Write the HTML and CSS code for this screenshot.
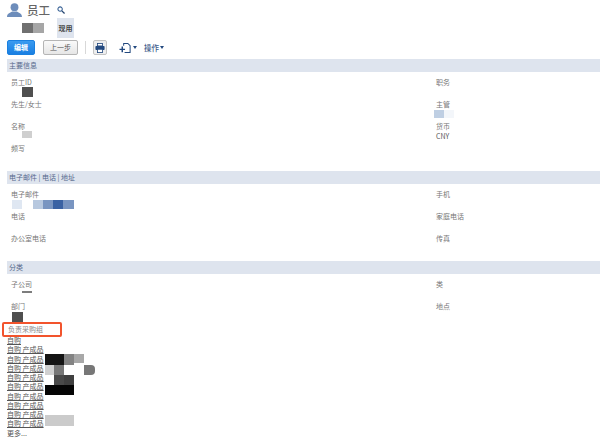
FILE: index.html
```html
<!DOCTYPE html>
<html lang="zh">
<head>
<meta charset="utf-8">
<title>员工</title>
<link rel="stylesheet" href="styles.css">
</head>
<body>
<header class="title-row">
  <svg class="user-icon" width="15" height="14" viewBox="0 0 16 15"><circle cx="8" cy="4.500" r="4.200" fill="#6d8dbb"/><path d="M0 15c0-4 3-4.500 5.500-6h5c2.500 1.500 5.500 2 5.500 6z" fill="#6d8dbb"/></svg>
  <h1 class="title">员工</h1>
  <svg class="search-icon" width="8" height="8" viewBox="0 0 9 9"><circle cx="3.500" cy="3.500" r="2.500" fill="none" stroke="#3a6396" stroke-width="1.200"/><path d="M5.500 5.500L8.500 8.500" stroke="#25456f" stroke-width="1.500"/></svg>
</header>
<div class="status-row">
  <div class="mosaic-pair"><span class="m m-dark"></span><span class="m m-mid"></span></div>
  <div class="status">现用</div>
</div>
<div class="toolbar">
  <button class="btn btn-primary">编辑</button>
  <button class="btn">上一步</button>
  <span class="divider"></span>
  <span class="print-btn">
    <svg width="10" height="10" viewBox="0 0 12 12"><rect x="3" y="0.500" width="6" height="3" fill="#fff" stroke="#23497f"/><rect x="0.500" y="3.500" width="11" height="5" rx="1" fill="#23497f"/><rect x="3" y="7.500" width="6" height="4" fill="#fff" stroke="#23497f"/></svg>
  </span>
  <span class="add-menu">
    <svg width="13" height="12" viewBox="0 0 14 13"><path d="M5 4V1.500h4.500L12 4v7.500H6" fill="none" stroke="#23497f" stroke-width="1.100"/><path d="M0.500 8h6M3.500 5v6" stroke="#23497f" stroke-width="1.600"/></svg>
    <span class="caret"></span>
  </span>
  <span class="action-menu">操作<span class="caret"></span></span>
</div>

<section class="section">
  <h2 class="section-head">主要信息</h2>
  <div class="fields">
    <div class="field"><div class="label">员工ID</div><span class="m m-ink m-indent"></span></div>
    <div class="field"><div class="label">职务</div></div>
    <div class="field"><div class="label">先生/女士</div></div>
    <div class="field"><div class="label">主管</div><div class="mosaic-pair mosaic-boss"><span class="m m-pale"></span><span class="m m-faint"></span></div></div>
    <div class="field"><div class="label">名称</div><span class="m m-light m-indent"></span></div>
    <div class="field"><div class="label">货币</div><div class="value">CNY</div></div>
    <div class="field"><div class="label">频写</div></div>
  </div>
</section>

<section class="section">
  <h2 class="section-head">电子邮件 | 电话 | 地址</h2>
  <div class="fields">
    <div class="field"><div class="label">电子邮件</div>
      <div class="mosaic-pair mosaic-mail"><span class="m m-ice"></span><span class="m m-gap"></span><span class="m m-b1"></span><span class="m m-b2"></span><span class="m m-b3"></span><span class="m m-b2"></span></div>
    </div>
    <div class="field"><div class="label">手机</div></div>
    <div class="field"><div class="label">电话</div></div>
    <div class="field"><div class="label">家庭电话</div></div>
    <div class="field"><div class="label">办公室电话</div></div>
    <div class="field"><div class="label">传真</div></div>
  </div>
</section>

<section class="section">
  <h2 class="section-head">分类</h2>
  <div class="fields fields-short">
    <div class="field"><div class="label">子公司</div><span class="m-bar"></span></div>
    <div class="field"><div class="label">类</div></div>
    <div class="field"><div class="label">部门</div><span class="m m-ink m-flush"></span></div>
    <div class="field"><div class="label">地点</div></div>
  </div>
</section>

<div class="group">
  <div class="group-label">负责采购组</div>
  <ul class="group-list">
    <li><a>自购</a></li>
    <li><a>自购 产成品</a></li>
    <li><a>自购 产成品</a></li>
    <li><a>自购 产成品</a></li>
    <li><a>自购 产成品</a></li>
    <li><a>自购 产成品</a></li>
    <li><a>自购 产成品</a></li>
    <li><a>自购 产成品</a></li>
    <li><a>自购 产成品</a></li>
    <li><a>自购 产成品</a></li>
    <li class="more">更多...</li>
  </ul>
  <div class="blot b1"></div><div class="blot b2"></div><div class="blot b3"></div>
  <div class="blot b4"></div><div class="blot b5"></div><div class="blot b6"></div>
  <div class="blot b7"></div><div class="blot b8"></div><div class="blot b9"></div>
  <div class="blot b10"></div>
</div>
</body>
</html>
```
FILE: styles.css
```css
* { box-sizing: border-box; }
html, body { margin: 0; padding: 0; }
body {
  width: 600px;
  height: 440px;
  overflow: hidden;
  background: #fff;
  color: #777;
  font-family: "Noto Sans CJK SC", "Liberation Sans", sans-serif;
  font-size: 7px;
  line-height: 9px;
}
.title-row {
  display: flex;
  align-items: center;
  height: 18px;
  padding: 2px 0 0 7px;
}
.title {
  margin: 0 0 0 5px;
  font-size: 11.500px;
  line-height: 16px;
  font-weight: 500;
  color: #666;
}
.search-icon { margin-left: 7px; }
.status-row {
  display: flex;
  align-items: center;
  height: 20px;
  padding-left: 22px;
}
.mosaic-pair { display: flex; }
.m { display: block; width: 11px; height: 10px; }
.m-dark { background: #707070; }
.m-mid { background: #a6a6a6; }
.status {
  display: flex;
  align-items: center;
  justify-content: center;
  width: 17px;
  height: 20px;
  margin-left: 13px;
  background: #dee4ee;
  color: #444;
  font-weight: 700;
}
.toolbar {
  display: flex;
  align-items: center;
  height: 19px;
  margin-bottom: 2px;
  padding-left: 7px;
}
.btn {
  height: 15px;
  width: 35px;
  margin: 0 7px 0 0;
  padding: 0;
  border: 1px solid #b5b5b5;
  border-radius: 2px;
  background: linear-gradient(#fafafa, #e6e6e6);
  color: #555;
  font: inherit;
}
.btn-primary {
  width: 28px;
  margin-right: 8px;
  border-color: #1a80e0;
  background: linear-gradient(#3a9bf0, #1a7fe2);
  color: #fff;
  font-weight: 700;
}
.divider {
  width: 1px;
  height: 13px;
  margin-left: 0;
  background: #d8d8d8;
}
.print-btn {
  display: flex;
  align-items: center;
  justify-content: center;
  width: 14px;
  height: 15px;
  margin-left: 7px;
  border: 1px solid #c4c4c4;
  border-radius: 2px;
  background: #eee;
}
.add-menu {
  display: flex;
  align-items: center;
  margin-left: 12px;
}
.caret {
  display: inline-block;
  width: 0;
  height: 0;
  margin-left: 1px;
  border: 2px solid transparent;
  border-top: 3px solid #23497f;
  border-bottom: 0;
}
.action-menu {
  display: flex;
  align-items: center;
  margin-left: 7px;
  color: #3d5a8a;
  font-weight: 500;
  font-size: 7.500px;
}
.section-head {
  height: 13px;
  margin: 0 0 0 7px;
  padding-left: 2px;
  background: #dee4ee;
  color: #56698c;
  font-size: 7px;
  font-weight: 400;
  line-height: 13px;
}
.fields {
  display: grid;
  grid-template-columns: 436px 1fr;
  grid-auto-rows: 22px;
  height: 99px;
  padding-top: 6px;
}
.fields-short { height: 48px; }
.section:nth-of-type(2) .fields { height: 77px; }
.field { padding-left: 11px; }
.field:nth-child(even) { padding-left: 0; }
.label { height: 9px; }
.value { color: #555; line-height: 10px; }
.m-indent { margin-left: 11px; }
.m-flush { margin-left: 1px; margin-top: 1px; }
.m-ink { background: #4f4f4f; }
.m-light { width: 10px; height: 7px; background: #cfcfcf; }
.mosaic-boss { margin-left: -2px; margin-top: 1px; }
.m-pale { width: 10px; height: 8px; background: #bfcfe3; }
.m-faint { width: 10px; height: 8px; background: #f3f6fa; }
.mosaic-mail { margin-left: 1px; margin-top: 1px; }
.mosaic-mail .m { width: 10.300px; height: 9px; }
.m-ice { background: #dfe7f2; }
.m-gap { background: #fff; }
.m-b1 { background: #b7c8df; }
.m-b2 { background: #7995c1; }
.m-b3 { background: #3a62a3; }
.m-bar { display: block; width: 10px; height: 2px; margin: 2px 0 0 11px; background: #7d7d7d; }
.group { position: relative; padding-left: 7px; }
.group-label {
  height: 15px;
  margin-left: -5px;
  width: 60px;
  padding-left: 4px;
  border: 2px solid #f2542d;
  border-radius: 2px;
  color: #888;
  line-height: 11px;
}
.group-list {
  margin: -1px 0 0;
  padding: 0;
  list-style: none;
  color: #555;
}
.group-list li { height: 9.250px; line-height: 9px; }
.group-list a { text-decoration: underline; }
.blot { position: absolute; }
.b1 { left: 45px; top: 32px; width: 19px; height: 11px; background: #141414; }
.b2 { left: 64px; top: 32px; width: 10px; height: 11px; background: #838383; }
.b3 { left: 74px; top: 32px; width: 10px; height: 9px; background: #a8a8a8; }
.b4 { left: 45px; top: 43px; width: 9px; height: 10px; background: #d0d0d0; }
.b5 { left: 54px; top: 43px; width: 10px; height: 10px; background: #777; }
.b6 { left: 84px; top: 43px; width: 11px; height: 10px; border-radius: 0 4px 4px 0; background: #777; }
.b7 { left: 54px; top: 53px; width: 10px; height: 10px; background: #4a4a4a; }
.b8 { left: 64px; top: 53px; width: 10px; height: 10px; background: #404040; }
.b9 { left: 45px; top: 63px; width: 29px; height: 10px; background: #050505; }
.b10 { left: 45px; top: 93px; width: 29px; height: 11px; background: #cbcbcb; }
```
